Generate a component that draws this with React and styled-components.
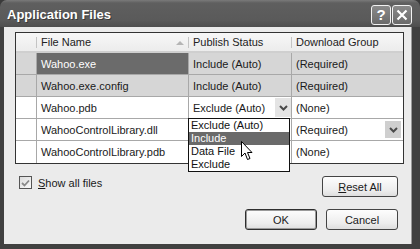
import React from "react";
import styled, { createGlobalStyle } from "styled-components";

const Global = createGlobalStyle`
  html, body { margin: 0; padding: 0; background: #3a3a3a; }
  body { font-family: "Liberation Sans", Arial, sans-serif; font-size: 11px; }
`;

const Window = styled.div`
  width: 420px;
  height: 249px;
  display: flex;
  flex-direction: column;
  background: #404040;
  border-radius: 7px 7px 0 0;
  overflow: hidden;
  box-sizing: border-box;
`;

const TitleBar = styled.div`
  height: 27px;
  flex: none;
  display: flex;
  align-items: center;
  padding: 0 8px 0 7px;
  background: linear-gradient(#7a7a7a 0px, #5f5f5f 3px, #5a5a5a 20px, #4e4e4e 27px);
  box-sizing: border-box;
`;

const Title = styled.div`
  flex: 1;
  color: #fff;
  font-weight: bold;
  font-size: 13px;
  padding-top: 2px;
  text-shadow: 1px 1px 0 #3a3a3a;
`;

const CapButtons = styled.div`
  display: flex;
  gap: 1px;
  padding-top: 2px;
`;

const CapButton = styled.div`
  width: 20px;
  height: 20px;
  box-sizing: border-box;
  border: 1px solid #f2f2f2;
  border-radius: 3px;
  background: linear-gradient(#8a8a8a, #6a6a6a);
  color: #fff;
  display: flex;
  align-items: center;
  justify-content: center;
  font-weight: bold;
  font-size: 15px;
`;

const Body = styled.div`
  flex: 1;
  margin: 0 8px 5px 4px;
  background: #ebebeb;
  display: flex;
  flex-direction: column;
  padding: 5px 8px 0 11px;
  box-sizing: border-box;
  border-right: 1px solid #9a9a9a;
`;

const Grid = styled.div`
  position: relative;
  display: grid;
  grid-template-columns: 21px 152px 103px 111px;
  grid-template-rows: 20px repeat(5, 22px);
  border: 1px solid #333;
  background: #fff;
  width: 389px;
  box-sizing: border-box;
`;

const HeadCell = styled.div`
  position: relative;
  display: flex;
  align-items: center;
  padding-left: 4px;
  background: linear-gradient(#f7f7f7, #ececec);
  border-bottom: 2px solid #cfcfcf;
  color: #222;
  box-sizing: border-box;
  &::after {
    content: "";
    display: ${(p) => (p.$last ? "none" : "block")};
    position: absolute;
    right: 0;
    top: 4px;
    bottom: 3px;
    width: 1px;
    background: #c4c4c4;
  }
`;

const SortArrow = styled.span`
  position: absolute;
  right: 5px;
  top: 8px;
  width: 0;
  height: 0;
  border-left: 4px solid transparent;
  border-right: 4px solid transparent;
  border-bottom: 4px solid #b5b5b5;
`;

const Cell = styled.div`
  position: relative;
  display: flex;
  align-items: center;
  padding-left: ${(p) => (p.$rowHead ? 0 : 4)}px;
  border-right: ${(p) => (p.$last ? "none" : "1px solid #a8a8a8")};
  border-bottom: ${(p) => (p.$lastRow ? "none" : "1px solid #a8a8a8")};
  background: ${(p) => (p.$active ? "#6b6b6b" : p.$sel ? "#d6d6d6" : "#fff")};
  color: ${(p) => (p.$active ? "#fff" : "#1a1a1a")};
  white-space: nowrap;
  box-sizing: border-box;
`;

const DropBtn = styled.div`
  position: absolute;
  right: ${(p) => p.$right}px;
  top: ${(p) => p.$top}px;
  bottom: ${(p) => p.$top}px;
  width: 16px;
  background: ${(p) => p.$bg};
  display: flex;
  align-items: center;
  justify-content: center;
`;

const List = styled.div`
  position: absolute;
  left: -1px;
  top: 100%;
  width: 102px;
  box-sizing: border-box;
  border: 1px solid #111;
  background: #fff;
  z-index: 2;
  display: flex;
  flex-direction: column;
`;

const ListItem = styled.div`
  height: 13px;
  line-height: 13px;
  padding-left: 2px;
  background: ${(p) => (p.$hi ? "#6a6a6a" : "#fff")};
  color: ${(p) => (p.$hi ? "#fff" : "#111")};
`;

const Cursor = styled.svg`
  position: absolute;
  left: 52px;
  top: 22px;
  z-index: 3;
`;

const OptionsRow = styled.div`
  display: flex;
  justify-content: space-between;
  align-items: flex-start;
  margin-top: 12px;
  padding: 0 5px 0 4px;
`;

const CheckLabel = styled.label`
  display: flex;
  align-items: center;
  gap: 6px;
  color: #1a1a1a;
  font-size: 11px;
  margin-top: 0px;
`;

const Box = styled.span`
  width: 13px;
  height: 13px;
  box-sizing: border-box;
  border: 1px solid #555;
  background: linear-gradient(135deg, #dcdcdc, #fafafa);
  display: flex;
  align-items: center;
  justify-content: center;
`;

const ButtonRow = styled.div`
  display: flex;
  justify-content: flex-end;
  gap: 9px;
  margin-top: 12px;
  padding-right: 5px;
`;

const Button = styled.div`
  width: ${(p) => p.$w}px;
  height: 21px;
  box-sizing: border-box;
  border: 1px solid ${(p) => (p.$def ? "#2e2e2e" : "#444")};
  box-shadow: ${(p) => (p.$def ? "inset 0 0 0 1px #9a9a9a" : "none")};
  border-radius: 3px;
  background: linear-gradient(#fdfdfd, #ededed 70%, #dedede);
  display: flex;
  align-items: center;
  justify-content: center;
  color: #1a1a1a;
  font-size: 11px;
`;

const U = styled.span`
  text-decoration: underline;
`;

const Chevron = () => (
  <svg width="9" height="6" viewBox="0 0 9 6">
    <path d="M1 1 L4.5 4.5 L8 1" fill="none" stroke="#4a4a4a" strokeWidth="2" />
  </svg>
);

const rows = [
  { name: "Wahoo.exe", status: "Include (Auto)", group: "(Required)", sel: true, active: true },
  { name: "Wahoo.exe.config", status: "Include (Auto)", group: "(Required)", sel: true },
  { name: "Wahoo.pdb", status: "Exclude (Auto)", group: "(None)", combo: true },
  { name: "WahooControlLibrary.dll", status: "", group: "(Required)", groupBtn: true },
  { name: "WahooControlLibrary.pdb", status: "", group: "(None)" },
];

export default function App() {
  return (
    <>
      <Global />
      <Window>
        <TitleBar>
          <Title>Application Files</Title>
          <CapButtons>
            <CapButton>?</CapButton>
            <CapButton>
              <svg width="12" height="12" viewBox="0 0 12 12">
                <path d="M1.5 1.5 L10.5 10.5 M10.5 1.5 L1.5 10.5" stroke="#fff" strokeWidth="2.2" />
              </svg>
            </CapButton>
          </CapButtons>
        </TitleBar>
        <Body>
          <Grid>
            <HeadCell />
            <HeadCell>
              File Name
              <SortArrow />
            </HeadCell>
            <HeadCell>Publish Status</HeadCell>
            <HeadCell $last>Download Group</HeadCell>
            {rows.map((r, i) => {
              const lastRow = i === rows.length - 1;
              return (
                <React.Fragment key={r.name}>
                  <Cell $rowHead $sel={r.sel} $lastRow={lastRow} />
                  <Cell $active={r.active} $sel={r.sel} $lastRow={lastRow}>
                    {r.name}
                  </Cell>
                  <Cell $sel={r.sel} $lastRow={lastRow}>
                    {r.status}
                    {r.combo && (
                      <>
                        <DropBtn $right={0} $top={1} $bg="#e4e4e4">
                          <Chevron />
                        </DropBtn>
                        <List>
                          <ListItem>Exclude (Auto)</ListItem>
                          <ListItem $hi>Include</ListItem>
                          <ListItem>Data File</ListItem>
                          <ListItem>Exclude</ListItem>
                          <Cursor width="12" height="20" viewBox="0 0 12 20">
                            <path
                              d="M0.5 0.5 L0.5 15.5 L4 12 L6.5 18.5 L9 17.5 L6.5 11.5 L11 11.5 Z"
                              fill="#fff"
                              stroke="#000"
                              strokeWidth="1"
                            />
                          </Cursor>
                        </List>
                      </>
                    )}
                  </Cell>
                  <Cell $sel={r.sel} $last $lastRow={lastRow}>
                    {r.group}
                    {r.groupBtn && (
                      <DropBtn $right={2} $top={2} $bg="#cfcfcf">
                        <Chevron />
                      </DropBtn>
                    )}
                  </Cell>
                </React.Fragment>
              );
            })}
          </Grid>
          <OptionsRow>
            <CheckLabel>
              <Box>
                <svg width="9" height="8" viewBox="0 0 9 8">
                  <path d="M1 4 L3.5 6.5 L8 1.5" fill="none" stroke="#8a8a8a" strokeWidth="1.8" />
                </svg>
              </Box>
              <span>
                <U>S</U>how all files
              </span>
            </CheckLabel>
            <Button $w={76}>
              <span>
                <U>R</U>eset All
              </span>
            </Button>
          </OptionsRow>
          <ButtonRow>
            <Button $w={72} $def>
              OK
            </Button>
            <Button $w={72}>Cancel</Button>
          </ButtonRow>
        </Body>
      </Window>
    </>
  );
}
